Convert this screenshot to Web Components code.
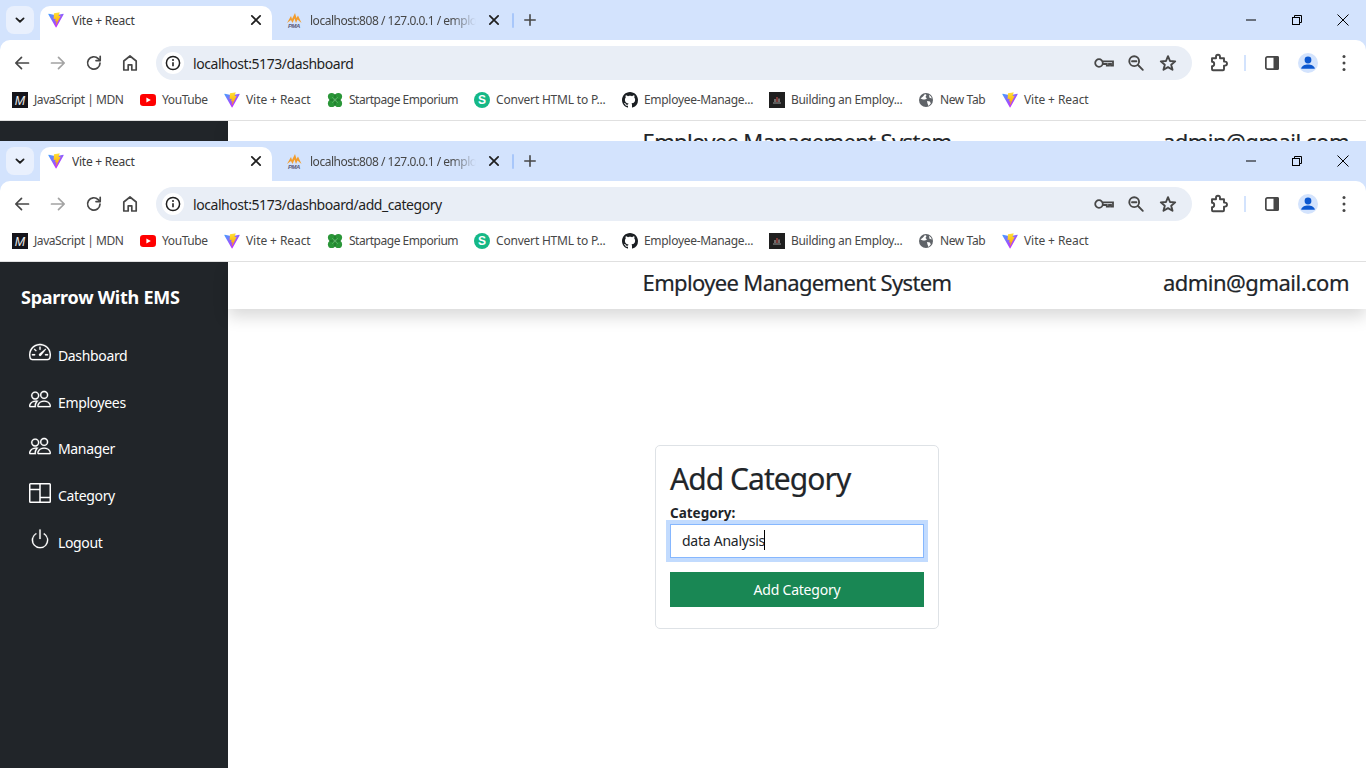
<!DOCTYPE html>
<html lang="en">
<head>
<meta charset="utf-8">
<title>Vite + React</title>
<style>
  html, body { margin: 0; height: 100%; overflow: hidden; background: #fff; }
  body { font-family: "Noto Sans", "Open Sans", sans-serif; }
</style>
</head>
<body>
<browser-window url="localhost:5173/dashboard" style="height:141px">
  <div style="display:flex;height:100%">
    <div style="width:228px;background:#212529"></div>
    <ems-header style="flex:1"></ems-header>
  </div>
</browser-window>
<browser-window url="localhost:5173/dashboard/add_category" style="height:627px">
  <ems-layout>
    <ems-sidebar slot="side" brand="Sparrow With EMS">
      <side-item icon="speedometer">Dashboard</side-item>
      <side-item icon="people">Employees</side-item>
      <side-item icon="people">Manager</side-item>
      <side-item icon="columns">Category</side-item>
      <side-item icon="power">Logout</side-item>
    </ems-sidebar>
    <ems-header slot="top"></ems-header>
    <category-form></category-form>
  </ems-layout>
</browser-window>

<script>
const VITE = `<svg viewBox="0 0 410 404" width="16" height="16">
  <defs>
    <linearGradient id="a" x1="6" y1="33" x2="235" y2="344" gradientUnits="userSpaceOnUse"><stop offset="0" stop-color="#41a5ff"/><stop offset="1" stop-color="#bd34fe"/></linearGradient>
    <linearGradient id="b" x1="194" y1="8" x2="236" y2="293" gradientUnits="userSpaceOnUse"><stop offset="0" stop-color="#ffea83"/><stop offset=".08" stop-color="#ffdd35"/><stop offset="1" stop-color="#ffa800"/></linearGradient>
  </defs>
  <path fill="url(#a)" d="M399.641 59.5246L215.643 388.545C211.844 395.338 202.084 395.378 198.228 388.618L10.5817 59.5563C6.38087 52.1896 12.6802 43.2665 21.0281 44.7586L205.223 77.6824C206.398 77.8924 207.601 77.8904 208.776 77.6763L389.119 44.8058C397.439 43.2894 403.768 52.1434 399.641 59.5246Z"/>
  <path fill="url(#b)" d="M292.965 1.5744L156.801 28.2552C154.563 28.6937 152.906 30.5903 152.771 32.8664L144.395 174.33C144.198 177.662 147.258 180.248 150.51 179.498L188.42 170.749C191.967 169.931 195.172 173.055 194.443 176.622L183.18 231.775C182.422 235.487 185.907 238.661 189.532 237.56L212.947 230.446C216.577 229.344 220.065 232.527 219.297 236.242L201.398 322.875C200.278 328.294 207.486 331.249 210.492 326.603L212.5 323.5L323.454 102.072C325.312 98.3645 322.108 94.137 318.036 94.9228L279.014 102.454C275.347 103.161 272.227 99.746 273.262 96.1583L298.731 7.86689C299.767 4.27314 296.636 0.855181 292.965 1.5744Z"/>
</svg>`;

const stroke = (body, size = 20, col = '#474747', w = 1.7) =>
  `<svg viewBox="0 0 20 20" width="${size}" height="${size}" fill="none" stroke="${col}" stroke-width="${w}" stroke-linecap="round" stroke-linejoin="round">${body}</svg>`;

const ICONS = {
  vite: VITE,
  pma: `<svg viewBox="0 0 16 16" width="16" height="16">
    <path fill="#f29d2e" d="M1 11 L5 4 L6 7 L9 1 L10.5 6 L12 3.5 L15.5 11 L11.5 7.5 L10 11 L8.5 6.5 L6.5 11 L5 8 Z"/>
    <text x="8" y="15.5" text-anchor="middle" font-family="Liberation Sans" font-size="6" font-weight="700" font-style="italic" fill="#5b5b7a">PMA</text></svg>`,
  mdn: `<svg viewBox="0 0 16 16" width="16" height="16"><rect width="16" height="16" fill="#15141a"/>
    <text x="8" y="12.6" text-anchor="middle" font-family="Liberation Sans" font-size="12.5" font-style="italic" fill="#eee">M</text></svg>`,
  youtube: `<svg viewBox="0 0 16 16" width="16" height="16"><rect y="2" width="16" height="12" rx="3.2" fill="#f00"/><path fill="#fff" d="M6.4 5.4 10.8 8 6.4 10.6Z"/></svg>`,
  clover: `<svg viewBox="0 0 16 16" width="16" height="16"><g fill="#2a9638">
    <circle cx="4.6" cy="4.6" r="3.7"/><circle cx="11.4" cy="4.6" r="3.7"/><circle cx="4.6" cy="11.4" r="3.7"/><circle cx="11.4" cy="11.4" r="3.7"/></g>
    <path d="M8 2v12M2 8h12" stroke="#1b6e28" stroke-width=".9"/><path d="M5 5l6 6M11 5l-6 6" stroke="#5cbb65" stroke-width=".7"/></svg>`,
  sgreen: `<svg viewBox="0 0 16 16" width="16" height="16"><circle cx="8" cy="8" r="8" fill="#15b886"/>
    <text x="8" y="12.2" text-anchor="middle" font-family="Liberation Sans" font-size="12" font-weight="700" fill="#fff">S</text></svg>`,
  github: `<svg viewBox="0 0 16 16" width="16" height="16"><path fill="#1b1f23" d="M8 0C3.58 0 0 3.58 0 8c0 3.54 2.29 6.53 5.47 7.59.4.07.55-.17.55-.38 0-.19-.01-.82-.01-1.49-2.01.37-2.53-.49-2.69-.94-.09-.23-.48-.94-.82-1.13-.28-.15-.68-.52-.01-.53.63-.01 1.08.58 1.23.82.72 1.21 1.87.87 2.33.66.07-.52.28-.87.51-1.07-1.78-.2-3.64-.89-3.64-3.95 0-.87.31-1.59.82-2.15-.08-.2-.36-1.02.08-2.12 0 0 .67-.21 2.2.82.64-.18 1.32-.27 2-.27.68 0 1.36.09 2 .27 1.53-1.04 2.2-.82 2.2-.82.44 1.1.16 1.92.08 2.12.51.56.82 1.27.82 2.15 0 3.07-1.87 3.75-3.65 3.95.29.25.54.73.54 1.48 0 1.07-.01 1.93-.01 2.2 0 .21.15.46.55.38A8.013 8.013 0 0 0 16 8c0-4.42-3.58-8-8-8z"/></svg>`,
  building: `<svg viewBox="0 0 16 16" width="16" height="16"><rect width="16" height="16" fill="#1f1f1f"/>
    <path d="M8 5v5" stroke="#d9534f" stroke-width="1"/><path d="M6 7v3M10 6.5V10" stroke="#bbb" stroke-width="1"/><path d="M4 11h8" stroke="#999" stroke-width="1"/></svg>`,
  globe: `<svg viewBox="0 0 16 16" width="16" height="16"><circle cx="8" cy="8" r="7" fill="#5f6368"/>
    <path fill="#fff" d="M2.5 6.5 5 4.5 7 2 8.5 3 7.5 5 9 6.5 7 7.5 5 7.5ZM9 9l3 .5.8 2L10.5 14l-1-2.5ZM11 2.8l2 1.7.8 2-2.3-.8Z"/></svg>`,
  back: stroke('<path d="M16.5 10H4M9.5 4.3 3.8 10l5.7 5.7"/>', 20),
  forward: stroke('<path d="M3.5 10H16M10.5 4.3l5.7 5.7-5.7 5.7"/>', 20, '#a3a3a3'),
  reload: stroke('<path d="M16 10.2A6.2 6.2 0 1 1 14.2 5.6L16 7.4"/><path d="M16.2 3.4v4.2H12"/>', 20),
  home: stroke('<path d="M10 3 3.8 8v9h4.4v-5.2h3.6V17h4.4V8Z"/>', 20),
  info: `<svg viewBox="0 0 16 16" width="16" height="16"><circle cx="8" cy="8" r="6.6" fill="none" stroke="#1f1f1f" stroke-width="1.5"/><path d="M8 7.2v4" stroke="#1f1f1f" stroke-width="1.6"/><circle cx="8" cy="5" r="1" fill="#1f1f1f"/></svg>`,
  key: `<svg viewBox="0 0 20 20" width="20" height="20" fill="none" stroke="#474747" stroke-width="1.8"><circle cx="5" cy="10" r="3.8"/><path d="M8.8 8.4h10.2v4.2h-2v-1.6h-2v1.6h-2.2v-1.6H8.8"/></svg>`,
  zoomout: stroke('<circle cx="8.2" cy="8.2" r="4.9"/><path d="M12 12l4.8 4.8M6 8.2h4.4"/>', 20, '#474747', 1.9),
  star: stroke('<path d="M10 3.2 12 8l5.2.4-4 3.4 1.3 5L10 14.1 5.5 16.8l1.3-5-4-3.4L8 8Z"/>', 20, '#474747', 1.9),
  ext: stroke('<path d="M3.5 5.5h4V4a2 2 0 0 1 4 0v1.5h4v3.3h1a2 2 0 0 1 0 4h-1v3.7a1 1 0 0 1-1 1h-10a1 1 0 0 1-1-1v-3.2a2.2 2.2 0 0 0 0-4.4Z" transform="translate(.5 -.2)"/>', 20, '#474747', 1.9),
  panel: `<svg viewBox="0 0 20 20" width="20" height="20"><rect x="3.85" y="3.85" width="12.3" height="12.3" rx="1.6" fill="none" stroke="#474747" stroke-width="1.7"/><path fill="#474747" d="M11.5 3h3.9A1.6 1.6 0 0 1 17 4.6v10.8a1.6 1.6 0 0 1-1.6 1.6h-3.9Z"/></svg>`,
  avatar: `<svg viewBox="0 0 20 20" width="20" height="20"><circle cx="10" cy="10" r="10" fill="#d3e3fd"/><circle cx="10" cy="7" r="3.4" fill="#0b57d0"/><path fill="#0b57d0" d="M3.2 15.8c0-2.7 3.8-4.2 6.8-4.2s6.8 1.5 6.8 4.2Z"/></svg>`,
  kebab: `<svg viewBox="0 0 20 20" width="20" height="20" fill="#474747"><circle cx="10" cy="3.5" r="1.5"/><circle cx="10" cy="10" r="1.5"/><circle cx="10" cy="16.5" r="1.5"/></svg>`,
  chevron: stroke('<path d="M5.5 8 10 12.2 14.5 8"/>', 16, '#1f1f1f', 2.2),
  close: stroke('<path d="M4.8 4.8l10.4 10.4M15.2 4.8 4.8 15.2"/>', 16, '#1f1f1f', 2.2),
  plus: stroke('<path d="M10 3.5v13M3.5 10h13"/>', 16, '#474747', 2),
  minimize: `<svg viewBox="0 0 10 10" width="10" height="10"><path d="M0 5h10" stroke="#000"/></svg>`,
  restore: `<svg viewBox="0 0 10 10" width="10" height="10" fill="none" stroke="#000"><rect x=".5" y="2.5" width="7" height="7"/><path d="M2.5 2.5v-2h7v7h-2"/></svg>`,
  winclose: `<svg viewBox="0 0 12 12" width="12" height="12"><path d="M.5.5l11 11M11.5.5l-11 11" stroke="#000"/></svg>`,
  speedometer: `<svg viewBox="0 0 16 16" width="22" height="22" fill="currentColor" stroke="currentColor" stroke-width=".12"><path d="M8 4a.5.5 0 0 1 .5.5V6a.5.5 0 0 1-1 0V4.5A.5.5 0 0 1 8 4zM3.732 5.732a.5.5 0 0 1 .707 0l.915.914a.5.5 0 1 1-.708.708l-.914-.915a.5.5 0 0 1 0-.707zM2 10a.5.5 0 0 1 .5-.5h1.586a.5.5 0 0 1 0 1H2.5A.5.5 0 0 1 2 10zm9.5 0a.5.5 0 0 1 .5-.5h1.5a.5.5 0 0 1 0 1H12a.5.5 0 0 1-.5-.5zm.754-4.246a.389.389 0 0 0-.527-.02L7.547 9.31a.91.91 0 1 0 1.302 1.258l3.434-4.297a.389.389 0 0 0-.029-.518z"/><path fill-rule="evenodd" d="M0 10a8 8 0 1 1 15.547 2.661c-.442 1.253-1.845 1.337-2.932 1.337H3.385c-1.086 0-2.49-.084-2.932-1.337A7.98 7.98 0 0 1 0 10zm8-7a7 7 0 0 0-6.603 9.329c.203.575.923.673 1.99.673h9.226c1.067 0 1.787-.098 1.99-.673A7 7 0 0 0 8 3z"/></svg>`,
  people: `<svg viewBox="0 0 16 16" width="22" height="22" fill="currentColor" stroke="currentColor" stroke-width=".12"><path d="M15 14s1 0 1-1-1-4-5-4-5 3-5 4 1 1 1 1h8Zm-7.978-1A.261.261 0 0 1 7 12.996c.001-.264.167-1.03.76-1.72C8.312 10.629 9.282 10 11 10c1.717 0 2.687.63 3.24 1.276.593.69.758 1.457.76 1.72l-.008.002a.274.274 0 0 1-.014.002H7.022ZM11 7a2 2 0 1 0 0-4 2 2 0 0 0 0 4Zm3-2a3 3 0 1 1-6 0 3 3 0 0 1 6 0ZM6.936 9.28a5.88 5.88 0 0 0-1.23-.247A7.35 7.35 0 0 0 5 9c-4 0-5 3-5 4 0 .667.333 1 1 1h4.216A2.238 2.238 0 0 1 5 13c0-1.01.377-2.042 1.09-2.904.243-.294.526-.569.846-.816ZM4.92 10A5.493 5.493 0 0 0 4 13H1c0-.26.164-1.03.76-1.724.545-.636 1.492-1.256 3.16-1.275ZM1.5 5.5a3 3 0 1 1 6 0 3 3 0 0 1-6 0Zm3-2a2 2 0 1 0 0 4 2 2 0 0 0 0-4Z"/></svg>`,
  columns: `<svg viewBox="0 0 22 20" width="22" height="20" fill="none" stroke="currentColor" stroke-width="1.5"><rect x=".75" y=".75" width="20.5" height="18.5" rx=".8"/><path d="M11 .7v18.6M.7 6.5H11M11 14.5h10.3"/></svg>`,
  power: `<svg viewBox="0 0 16 16" width="22" height="22" fill="currentColor" stroke="currentColor" stroke-width=".12"><path d="M7.5 1v7h1V1h-1z"/><path d="M3 8.812a4.999 4.999 0 0 1 2.578-4.375l-.485-.874A6 6 0 1 0 11 3.616l-.501.865A5 5 0 1 1 3 8.812z"/></svg>`
};

class UiIcon extends HTMLElement {
  constructor() {
    super();
    this.attachShadow({ mode: 'open' });
    this.shadowRoot.innerHTML = `
      <style>
        :host { display: inline-flex; align-items: center; justify-content: center; flex: none; }
        svg { display: block; }
      </style>
      ${ICONS[this.getAttribute('name')] || ''}`;
  }
}
customElements.define('ui-icon', UiIcon);

class BookMark extends HTMLElement {
  constructor() {
    super();
    this.attachShadow({ mode: 'open' });
    this.shadowRoot.innerHTML = `
      <style>
        :host { display: flex; align-items: center; gap: 6px; flex: none; }
        span { width: ${this.getAttribute('w')}px; margin-bottom: 1px; font-size: 12px; letter-spacing: ${this.getAttribute('ls')}px; color: #474747; white-space: nowrap; }
      </style>
      <ui-icon name="${this.getAttribute('icon')}"></ui-icon>
      <span><slot></slot></span>`;
  }
}
customElements.define('book-mark', BookMark);

class BrowserWindow extends HTMLElement {
  constructor() {
    super();
    this.attachShadow({ mode: 'open' });
    const btn = (n, cls = '') => `<div class="btn ${cls}"><ui-icon name="${n}"></ui-icon></div>`;
    this.shadowRoot.innerHTML = `
      <style>
        :host { display: flex; flex-direction: column; overflow: hidden; background: #d3e3fd; font-family: "Noto Sans", "Open Sans", sans-serif; }
        #tabs { height: 40px; flex: none; display: flex; align-items: flex-end; padding-left: 6px; box-sizing: border-box; }
        #list { width: 28px; height: 28px; margin: 0 6px 6px 0; border-radius: 8px; background: #e9f0fd; display: flex; align-items: center; justify-content: center; }
        .tab { height: 34px; box-sizing: border-box; display: flex; align-items: center; padding-bottom: 6px; font-size: 12px; letter-spacing: -.25px; color: #474747; }
        #active { width: 232px; padding-left: 8px; padding-right: 8px; gap: 8px; background: #fff; border-radius: 10px 10px 0 0; color: #3c3c3c; }
        #other { width: 240px; padding-left: 14px; padding-right: 2px; gap: 8px; letter-spacing: -.48px; }
        .title { flex: 1; white-space: nowrap; overflow: hidden; }
        #other .title { -webkit-mask-image: linear-gradient(90deg, #000 85%, transparent 100%); mask-image: linear-gradient(90deg, #000 85%, transparent 100%); margin-right: 2px; }
        #other ui-icon:last-child { margin-right: 8px; }
        #sep { width: 2px; height: 15px; background: #a8c7fa; align-self: flex-start; margin-top: 13px; flex: none; border-radius: 1px; }
        #plus { width: 32px; height: 28px; margin-bottom: 6px; display: flex; align-items: center; justify-content: center; }
        #win { margin-left: auto; display: flex; height: 40px; align-self: flex-start; }
        #win div { width: 46px; display: flex; align-items: center; justify-content: center; }
        #bar { height: 41px; flex: none; box-sizing: border-box; background: #fff; border-radius: 10px 10px 0 0; padding: 6px 4px 1px; display: flex; align-items: stretch; }
        .btn { width: 36px; display: flex; align-items: center; justify-content: center; flex: none; }
        #omni { flex: 1; margin: 0 8px; background: #e9eef6; border-radius: 17px; display: flex; align-items: center; padding: 0 8px 0 6px; min-width: 0; }
        #info { width: 22px; height: 22px; border-radius: 50%; background: #fff; display: flex; align-items: center; justify-content: center; flex: none; }
        #url { flex: 1; margin-left: 9px; font-size: 14px; letter-spacing: -.44px; color: #1f1f1f; white-space: nowrap; }
        #omni .btn { width: 32px; }
        #div { width: 2px; height: 16px; background: #d3e3fd; margin: 9px 8px 0 8px; flex: none; }
        #marks { height: 40px; flex: none; box-sizing: border-box; background: #fff; border-bottom: 1px solid #e0e0e0; padding-bottom: 1px; display: flex; align-items: center; gap: 16px; padding-left: 12px; overflow: hidden; }
        #page { flex: 1; min-height: 0; background: #fff; overflow: hidden; }
      </style>
      <div id="tabs">
        <div id="list"><ui-icon name="chevron"></ui-icon></div>
        <div class="tab" id="active">
          <ui-icon name="vite"></ui-icon><span class="title">Vite + React</span><ui-icon name="close"></ui-icon>
        </div>
        <div class="tab" id="other">
          <ui-icon name="pma"></ui-icon><span class="title">localhost:808 / 127.0.0.1 / employee</span><ui-icon name="close"></ui-icon>
        </div>
        <div id="sep"></div>
        <div id="plus"><ui-icon name="plus"></ui-icon></div>
        <div id="win">
          <div><ui-icon name="minimize"></ui-icon></div>
          <div><ui-icon name="restore"></ui-icon></div>
          <div><ui-icon name="winclose"></ui-icon></div>
        </div>
      </div>
      <div id="bar">
        ${btn('back')}${btn('forward')}${btn('reload')}${btn('home')}
        <div id="omni">
          <div id="info"><ui-icon name="info"></ui-icon></div>
          <div id="url">${this.getAttribute('url')}</div>
          ${btn('key')}${btn('zoomout')}${btn('star')}
        </div>
        ${btn('ext')}<div id="div"></div>${btn('panel')}${btn('avatar')}${btn('kebab')}
      </div>
      <div id="marks">
        <book-mark icon="mdn" w="90" ls="-.44">JavaScript | MDN</book-mark>
        <book-mark icon="youtube" w="46" ls="-.4">YouTube</book-mark>
        <book-mark icon="vite" w="65" ls="-.08">Vite + React</book-mark>
        <book-mark icon="clover" w="109" ls="-.47">Startpage Emporium</book-mark>
        <book-mark icon="sgreen" w="110" ls="-.2">Convert HTML to P...</book-mark>
        <book-mark icon="github" w="109" ls="-.3">Employee-Manage...</book-mark>
        <book-mark icon="building" w="111" ls="-.3">Building an Employ...</book-mark>
        <book-mark icon="globe" w="46" ls="-.4">New Tab</book-mark>
        <book-mark icon="vite" w="65" ls="-.08">Vite + React</book-mark>
      </div>
      <div id="page"><slot></slot></div>`;
  }
}
customElements.define('browser-window', BrowserWindow);

class EmsHeader extends HTMLElement {
  constructor() {
    super();
    this.attachShadow({ mode: 'open' });
    this.shadowRoot.innerHTML = `
      <style>
        :host { display: grid; grid-template-columns: 1fr auto 1fr; height: 47px; box-sizing: border-box; padding: 0 17px; background: #fff; color: #212529;
                box-shadow: 0 8px 16px rgba(0,0,0,.15); font: 22px/40px "Noto Sans", sans-serif; letter-spacing: -.5px; -webkit-text-stroke: .2px #212529; }
        #name { letter-spacing: -.65px; }
        #who { justify-self: end; }
      </style>
      <span></span><span id="name">Employee Management System</span><span id="who">admin@gmail.com</span>`;
  }
}
customElements.define('ems-header', EmsHeader);

class SideItem extends HTMLElement {
  constructor() {
    super();
    this.attachShadow({ mode: 'open' });
    this.shadowRoot.innerHTML = `
      <style>
        :host { display: flex; align-items: center; gap: 7px; height: 46.75px; padding-left: 29px; color: #fff; font-size: 14px; letter-spacing: -.35px; }
        ui-icon { width: 22px; margin-bottom: 8px; }
        span { margin-bottom: 2px; }
      </style>
      <ui-icon name="${this.getAttribute('icon')}"></ui-icon><span><slot></slot></span>`;
  }
}
customElements.define('side-item', SideItem);

class EmsSidebar extends HTMLElement {
  constructor() {
    super();
    this.attachShadow({ mode: 'open' });
    this.shadowRoot.innerHTML = `
      <style>
        :host { display: block; width: 228px; height: 100%; background: #212529; color: #fff; }
        #brand { height: 71px; box-sizing: border-box; padding: 0 0 2px 21px; display: flex; align-items: center; font-size: 18px; font-weight: 700; letter-spacing: -.26px; }
      </style>
      <div id="brand">${this.getAttribute('brand')}</div>
      <slot></slot>`;
  }
}
customElements.define('ems-sidebar', EmsSidebar);

class CategoryForm extends HTMLElement {
  constructor() {
    super();
    this.attachShadow({ mode: 'open' });
    this.shadowRoot.innerHTML = `
      <style>
        :host { display: block; width: 284px; box-sizing: border-box; border: 1px solid #dee2e6; border-radius: 5px; padding: 14px 14px 21px; background: #fff; color: #212529; font-family: "Noto Sans", sans-serif; }
        h2 { margin: 0 0 5px; font-size: 30px; line-height: 38px; font-weight: 400; letter-spacing: -.95px; -webkit-text-stroke: .2px #212529; }
        label { display: block; font-size: 13.5px; line-height: 21px; font-weight: 700; letter-spacing: 0; }
        #field { height: 34px; box-sizing: border-box; border: 1px solid #86b7fe; box-shadow: 0 0 0 4px rgba(13,110,253,.25); background: #fff; display: flex; align-items: center; padding: 0 0 2px 11px; font-size: 14px; letter-spacing: -.25px; }
        #caret { width: 1px; height: 20px; background: #000; margin-left: -1px; }
        button { display: block; width: 100%; height: 35px; margin-top: 14px; border: 0; border-radius: 0; background: #198754; color: #fff; font: 14px "Noto Sans", sans-serif; letter-spacing: -.22px; }
      </style>
      <h2>Add Category</h2>
      <label>Category:</label>
      <div id="field" role="textbox"><span>data Analysis</span><span id="caret"></span></div>
      <button type="button">Add Category</button>`;
  }
}
customElements.define('category-form', CategoryForm);

class EmsLayout extends HTMLElement {
  constructor() {
    super();
    this.attachShadow({ mode: 'open' });
    this.shadowRoot.innerHTML = `
      <style>
        :host { display: flex; height: 100%; }
        #col { flex: 1; display: flex; flex-direction: column; min-width: 0; }
        #main { flex: 1; display: flex; align-items: center; justify-content: center; padding-bottom: 3px; }
      </style>
      <slot name="side"></slot>
      <div id="col">
        <slot name="top"></slot>
        <div id="main"><slot></slot></div>
      </div>`;
  }
}
customElements.define('ems-layout', EmsLayout);
</script>
</body>
</html>
